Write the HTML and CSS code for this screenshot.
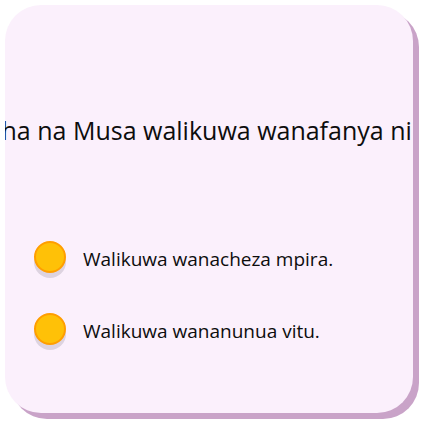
FILE: index.html
```html
<!DOCTYPE html>
<html>
<head>
<meta charset="utf-8">
<link rel="stylesheet" href="styles.css">
</head>
<body>
<div class="card">
  <div class="question"><span>Asha na Musa walikuwa wanafanya nini?</span></div>
  <ul class="options">
    <li class="option"><span class="dot"></span><span class="label">Walikuwa wanacheza mpira.</span></li>
    <li class="option"><span class="dot"></span><span class="label">Walikuwa wananunua vitu.</span></li>
  </ul>
</div>
</body>
</html>
```
FILE: styles.css
```css
html, body {
  margin: 0;
  padding: 0;
  background: #ffffff;
}
body {
  width: 424px;
  height: 424px;
  font-family: "Open Sans", "Noto Sans", sans-serif;
  color: #0d0d0d;
}
.card {
  margin: 5px 0 0 5px;
  width: 408px;
  height: 408px;
  box-sizing: border-box;
  background: #fbf0fc;
  border-radius: 36px;
  box-shadow: 6px 6px 0 #c9a3c8;
  overflow: hidden;
  padding-top: 108px;
}
.question {
  display: flex;
  justify-content: center;
  white-space: nowrap;
  font-size: 25px;
  line-height: 34px;
  height: 34px;
}
.options {
  list-style: none;
  margin: 94px 0 0 0;
  padding: 0 0 0 29px;
  display: flex;
  flex-direction: column;
  gap: 36px;
}
.option {
  display: flex;
  align-items: center;
  gap: 17px;
  height: 36px;
}
.dot {
  width: 32px;
  height: 32px;
  box-sizing: border-box;
  border-radius: 50%;
  background: #ffc107;
  border: 2px solid #ff9e00;
  box-shadow: 0 5px 0 #ddd3e0;
  flex: none;
  margin-bottom: 4px;
}
.label {
  font-size: 19px;
  line-height: 24px;
}
```
